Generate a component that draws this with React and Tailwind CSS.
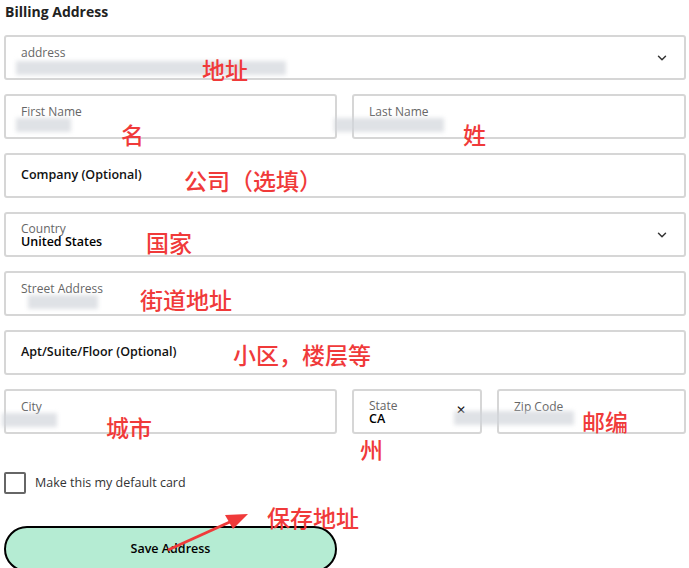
import React from "react";

const F = { fontFamily: "'Open Sans', 'Liberation Sans', sans-serif" };
const R = { fontFamily: "'Noto Sans CJK SC', sans-serif" };

function Blur({ w, className = "" }) {
  return <div className={"h-[14px] bg-gray-300/70 blur-[2px] " + className} style={{ width: w }} />;
}

function Chevron() {
  return (
    <svg width="14" height="14" viewBox="0 0 24 24" fill="none" stroke="#333" strokeWidth="2.5" strokeLinecap="round" strokeLinejoin="round">
      <path d="M6 9l6 6 6-6" />
    </svg>
  );
}

function Field({ label, value, blur, chevron, className = "", placeholder }) {
  return (
    <div className={"relative h-[45px] border-2 border-[#d6d6d6] rounded-[3px] px-[15px] flex items-center justify-between " + className}>
      {placeholder ? (
        <span className="text-[12.5px] font-semibold text-[#111]">{placeholder}</span>
      ) : (
        <div className="flex flex-col leading-[12px] pt-[2px]">
          <span className="text-[12px] text-[#666]">{label}</span>
          {value ? <span className="text-[12.5px] font-semibold text-black leading-[14px]">{value}</span> : <span className="h-[12px]" />}
        </div>
      )}
      {chevron && <Chevron />}
      {blur}
    </div>
  );
}

function Red({ children, x, y }) {
  return (
    <span className="absolute text-[23px] font-medium text-[#f03a3a] leading-none whitespace-nowrap" style={{ ...R, left: x, top: y }}>
      {children}
    </span>
  );
}

export default function App() {
  return (
    <div className="relative w-[689px] h-[568px] overflow-hidden bg-white" style={F}>
      <div className="px-[4px] pt-[1px] flex flex-col">
        <h2 className="text-[14px] font-bold text-[#222] h-[20px] ml-[1px]">Billing Address</h2>
        <div className="flex flex-col gap-[14px] mt-[14px] w-[682px]">
          <Field label="address" chevron blur={<div className="absolute left-[10px] top-[24px] flex"><Blur w={270} /></div>} />
          <div className="flex gap-[15px]">
            <Field label="First Name" className="w-[333px]" blur={<div className="absolute left-[10px] top-[22px]"><Blur w={55} /></div>} />
            <Field label="Last Name" className="w-[334px]" blur={<div className="absolute left-[-20px] top-[22px]"><Blur w={110} /></div>} />
          </div>
          <Field placeholder="Company (Optional)" />
          <Field label="Country" value="United States" chevron />
          <Field label="Street Address" blur={<div className="absolute left-[22px] top-[22px]"><Blur w={70} /></div>} />
          <Field placeholder="Apt/Suite/Floor (Optional)" />
          <div className="flex gap-[15px]">
            <Field label="City" className="w-[333px]" blur={<div className="absolute left-[-4px] top-[22px]"><Blur w={55} /></div>} />
            <Field label="State" value="CA" className="w-[130px]" blur={<span className="absolute right-[14px] top-[10px] text-[12px]">✕</span>} />
            <Field label="Zip Code" className="w-[189px]" blur={<div className="absolute left-[-45px] top-[20px]"><Blur w={120} /></div>} />
          </div>
        </div>
        <label className="flex items-center gap-[9px] mt-[38px]">
          <span className="w-[22px] h-[22px] border-2 border-[#666] rounded-[2px]" />
          <span className="text-[12.5px] text-[#333]">Make this my default card</span>
        </label>
        <button className="mt-[32px] w-[333px] h-[46px] rounded-full border-2 border-black bg-[#b5ecd3] text-[12.5px] font-semibold text-black flex items-center justify-center">
          Save Address
        </button>
      </div>
      <Red x={202} y={58}>地址</Red>
      <Red x={121} y={123}>名</Red>
      <Red x={463} y={123}>姓</Red>
      <Red x={184} y={169}>公司（选填）</Red>
      <Red x={146} y={231}>国家</Red>
      <Red x={140} y={288}>街道地址</Red>
      <Red x={233} y={343}>小区，楼层等</Red>
      <Red x={106} y={416}>城市</Red>
      <Red x={360} y={438}>州</Red>
      <Red x={582} y={410}>邮编</Red>
      <Red x={267} y={506}>保存地址</Red>
      <svg className="absolute left-0 top-0" width="689" height="568">
        <line x1="168" y1="550" x2="232" y2="521" stroke="#f03a3a" strokeWidth="3" />
        <polygon points="248,514 225,515 233,529" fill="#f03a3a" />
      </svg>
    </div>
  );
}
